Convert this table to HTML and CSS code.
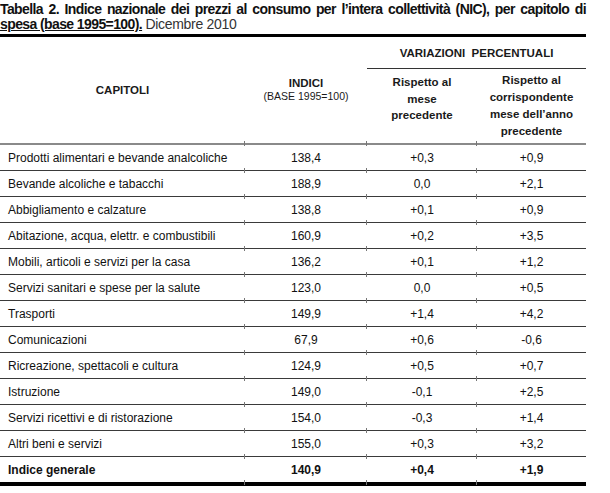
FILE: index.html
```html
<!DOCTYPE html>
<html>
<head>
    <title>Tabella 2 - NIC per capitolo di spesa</title>
    <link rel="stylesheet" href="styles.css">
</head>
<body>
    <div class="sheet">
        <div class="caption">
            <div class="line-one">Tabella 2. Indice nazionale dei prezzi al consumo per l&rsquo;intera collettività (NIC), per capitolo di</div>
            <div class="line-two"><span class="ul">spesa (base 1995=100).</span> <span class="date">Dicembre 2010</span></div>
        </div>

        <table class="nic">
            <colgroup>
                <col class="c-cap">
                <col class="c-idx">
                <col class="c-mese">
                <col class="c-anno">
            </colgroup>
            <thead>
                <tr class="head-top">
                    <th rowspan="2" class="tick">CAPITOLI</th>
                    <th rowspan="2" class="tick">INDICI<br><span class="sub">(BASE 1995=100)</span></th>
                    <th colspan="2" class="group">VARIAZIONI&nbsp; PERCENTUALI</th>
                </tr>
                <tr class="head-sub">
                    <th class="tick mese">Rispetto al<br>mese<br>precedente</th>
                    <th>Rispetto al<br>corrispondente<br>mese dell&rsquo;anno<br>precedente</th>
                </tr>
            </thead>
            <tbody>
                <tr><td>Prodotti alimentari e bevande analcoliche</td><td>138,4</td><td>+0,3</td><td>+0,9</td></tr>
                <tr><td>Bevande alcoliche e tabacchi</td><td>188,9</td><td>0,0</td><td>+2,1</td></tr>
                <tr><td>Abbigliamento e calzature</td><td>138,8</td><td>+0,1</td><td>+0,9</td></tr>
                <tr><td>Abitazione, acqua, elettr. e combustibili</td><td>160,9</td><td>+0,2</td><td>+3,5</td></tr>
                <tr><td>Mobili, articoli e servizi per la casa</td><td>136,2</td><td>+0,1</td><td>+1,2</td></tr>
                <tr><td>Servizi sanitari e spese per la salute</td><td>123,0</td><td>0,0</td><td>+0,5</td></tr>
                <tr><td>Trasporti</td><td>149,9</td><td>+1,4</td><td>+4,2</td></tr>
                <tr><td>Comunicazioni</td><td>67,9</td><td>+0,6</td><td>-0,6</td></tr>
                <tr><td>Ricreazione, spettacoli e cultura</td><td>124,9</td><td>+0,5</td><td>+0,7</td></tr>
                <tr><td>Istruzione</td><td>149,0</td><td>-0,1</td><td>+2,5</td></tr>
                <tr><td>Servizi ricettivi e di ristorazione</td><td>154,0</td><td>-0,3</td><td>+1,4</td></tr>
                <tr><td>Altri beni e servizi</td><td>155,0</td><td>+0,3</td><td>+3,2</td></tr>
                <tr class="total"><td>Indice generale</td><td>140,9</td><td>+0,4</td><td>+1,9</td></tr>
            </tbody>
        </table>
    </div>
</body>
</html>
```

FILE: styles.css
```css
body {
    margin: 0;
    background: #fff;
    color: #111;
    font-family: "Liberation Sans", Arial, sans-serif;
}
.sheet {
    width: 586px;
}
.caption {
    font-weight: bold;
    font-size: 14px;
    line-height: 15px;
    letter-spacing: -0.6px;
    padding-top: 2px;
    height: 32px;
    border-bottom: 3px solid #000;
    color: #111;
}
.caption .line-one {
    text-align: justify;
    text-align-last: justify;
    white-space: nowrap;
}
.caption .ul {
    text-decoration: underline;
}
.caption .date {
    font-weight: normal;
    letter-spacing: -0.3px;
    color: #333;
}
.nic {
    width: 586px;
    border-collapse: collapse;
    table-layout: fixed;
}
.c-cap { width: 245px; }
.c-idx { width: 122px; }
.c-mese { width: 110px; }
.c-anno { width: 109px; }

.nic th {
    font-size: 11.5px;
    font-weight: bold;
    text-align: center;
    padding: 0;
    color: #1a1a1a;
}
.head-top th {
    height: 31px;
}
.head-top .group {
    border-bottom: 1px solid #333;
    vertical-align: middle;
}
.head-sub th {
    height: 74px;
    line-height: 17px;
}
.head-sub th.mese {
    height: 69px;
    line-height: 16.5px;
    vertical-align: top;
    padding-top: 5px;
}
.nic thead tr:last-child th,
.nic thead th[rowspan] {
    border-bottom: 2px solid #8a8a8a;
}
.nic th .sub {
    font-weight: normal;
    font-size: 10.5px;
    line-height: 14px;
}
.nic td {
    height: 25px;
    padding: 0;
    font-size: 12px;
    text-align: center;
    border-bottom: 1px solid #3a3a3a;
    position: relative;
}
.nic td:first-child {
    text-align: left;
    padding-left: 8px;
}
/* little tick marks left on the rules at each column border */
.nic td:not(:last-child)::after,
.nic th.tick::after {
    content: "";
    position: absolute;
    right: 0;
    bottom: -3px;
    width: 1px;
    height: 5px;
    background: #777;
}
.nic th.tick {
    position: relative;
}
.total td {
    font-weight: bold;
    border-bottom: 4px solid #000;
}
```
